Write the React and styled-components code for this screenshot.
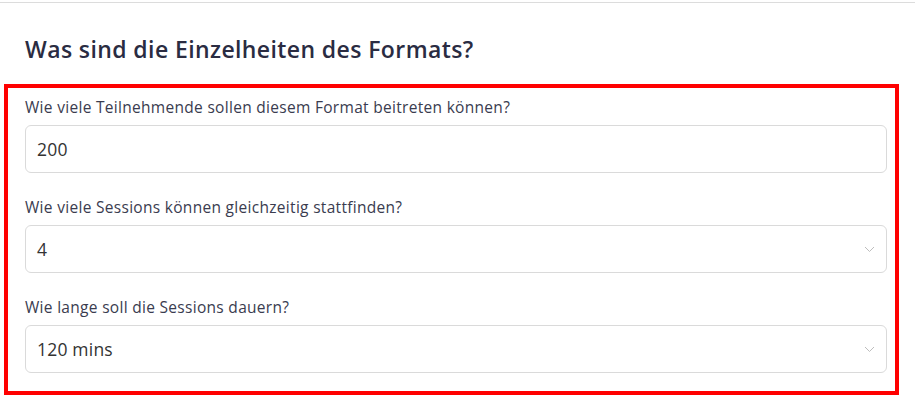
import React from 'react';
import styled, {createGlobalStyle} from 'styled-components';

const GlobalStyle = createGlobalStyle`
    html, body {
        margin: 0;
        padding: 0;
        background: #ffffff;
        font-family: "Open Sans", "Noto Sans", sans-serif;
    }
`;

const Page = styled.div`
    width: 915px;
    height: 405px;
    overflow: hidden;
    background: #fff;
`;

const TopRule = styled.div`
    margin-top: 2px;
    height: 1px;
    background: #dcdcdc;
`;

const Title = styled.h2`
    margin: 31px 0 20px 25px;
    font-size: 23px;
    line-height: 30px;
    font-weight: 600;
    letter-spacing: 0.4px;
    color: #2a2c42;
`;

const Frame = styled.div`
    margin-left: 4px;
    width: 895px;
    box-sizing: border-box;
    border: 4px solid #ff0000;
    padding: 9px 8px 18px 17px;
    display: flex;
    flex-direction: column;
    gap: 24px;
`;

const Field = styled.div`
    display: flex;
    flex-direction: column;
    gap: 8px;
`;

const Label = styled.label`
    font-size: 15.5px;
    line-height: 20px;
    letter-spacing: 0.3px;
    color: #3a3c4f;
`;

const Box = styled.div`
    height: 48px;
    box-sizing: border-box;
    border: 1px solid #dadada;
    border-radius: 6px;
    padding: 0 11px;
    display: flex;
    align-items: center;
    justify-content: space-between;
    font-size: 17.5px;
    letter-spacing: 0.2px;
    color: #333;
    background: #fff;
`;

const Input = styled.input`
    border: none;
    outline: none;
    padding: 0;
    width: 100%;
    font: inherit;
    letter-spacing: inherit;
    color: inherit;
    background: transparent;
`;

const Chevron = () => (
    <svg width="11" height="7" viewBox="0 0 11 7">
        <polyline points="1,1 5.5,5.5 10,1" fill="none" stroke="#bdbdbd" strokeWidth="1" />
    </svg>
);

const fields = [
    {label: 'Wie viele Teilnehmende sollen diesem Format beitreten können?', value: '200', select: false},
    {label: 'Wie viele Sessions können gleichzeitig stattfinden?', value: '4', select: true},
    {label: 'Wie lange soll die Sessions dauern?', value: '120 mins', select: true},
];

export default function App() {
    return (
        <Page>
            <GlobalStyle />
            <TopRule />
            <Title>Was sind die Einzelheiten des Formats?</Title>
            <Frame>
                {fields.map(f => (
                    <Field key={f.label}>
                        <Label>{f.label}</Label>
                        {f.select ? (
                            <Box role="combobox">
                                <span>{f.value}</span>
                                <Chevron />
                            </Box>
                        ) : (
                            <Box>
                                <Input readOnly value={f.value} />
                            </Box>
                        )}
                    </Field>
                ))}
            </Frame>
        </Page>
    );
}
